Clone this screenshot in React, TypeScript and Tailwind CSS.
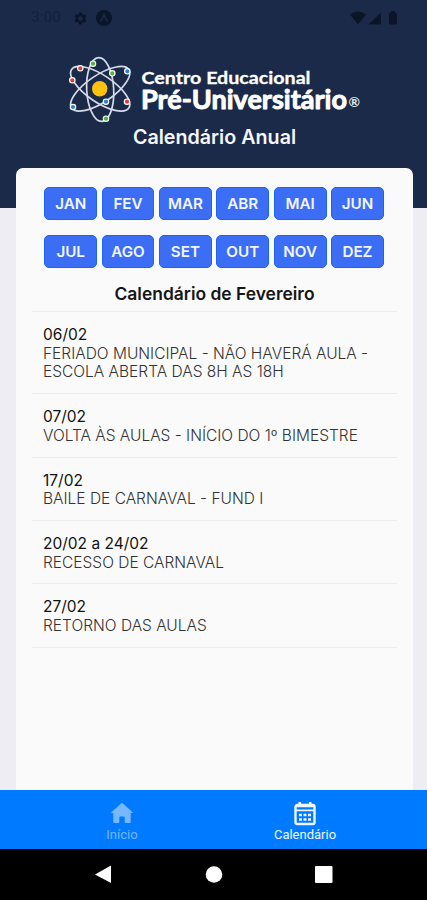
import type { ReactNode } from "react";
import { MdSettings } from "react-icons/md";

type CalendarEvent = {
  date: string;
  title: string;
};

const MONTH_ROWS = [
  ["JAN", "FEV", "MAR", "ABR", "MAI", "JUN"],
  ["JUL", "AGO", "SET", "OUT", "NOV", "DEZ"],
];

const EVENTS: CalendarEvent[] = [
  {
    date: "06/02",
    title: "FERIADO MUNICIPAL - NÃO HAVERÁ AULA - ESCOLA ABERTA DAS 8H AS 18H",
  },
  { date: "07/02", title: "VOLTA ÀS AULAS - INÍCIO DO 1º BIMESTRE" },
  { date: "17/02", title: "BAILE DE CARNAVAL - FUND I" },
  { date: "20/02 a 24/02", title: "RECESSO DE CARNAVAL" },
  { date: "27/02", title: "RETORNO DAS AULAS" },
];

const ELECTRONS = [
  { x: 20.3, y: 18.3, color: "#e23b3b" },
  { x: 12.3, y: 30.3, color: "#e23b3b" },
  { x: 33, y: 13.7, color: "#4cb82e" },
  { x: 52.3, y: 23.3, color: "#4cb82e" },
  { x: 67.3, y: 21.3, color: "#2f7fd6" },
  { x: 67, y: 51.7, color: "#e23b3b" },
  { x: 46, y: 51.7, color: "#2f7fd6" },
  { x: 13, y: 57, color: "#2f7fd6" },
  { x: 46, y: 68.7, color: "#4cb82e" },
];

function StatusBar() {
  return (
    <div className="flex h-9 items-center justify-between pl-[31px] pr-[29px] text-[#0a1628]">
      <div className="flex items-center">
        <span className="w-[42px] font-['Roboto'] text-[15.500px] text-[#12213c]">3:00</span>
        <MdSettings className="size-[15px]" />
        <svg viewBox="0 0 16 16" className="ml-[8px] size-4">
          <circle cx="8" cy="8" r="8" fill="currentColor" />
          <path
            d="M4.300 11.500Q6.500 8.500 8 4.600 9.500 8.500 11.700 11.500"
            fill="none"
            stroke="#1b2a49"
            strokeWidth="1.600"
          />
        </svg>
      </div>
      <svg viewBox="0 0 48 14" className="h-[14px] w-12" fill="currentColor">
        <path d="M0 3.500Q8 -2.500 16 3.500L8 13.500z" />
        <path d="M31 1.500v12H18.500z" />
        <path d="M41 0h4v2h-4zM39 3q0-1.500 1.500-1.500h5q1.500 0 1.500 1.500v9q0 1.500-1.500 1.500h-5q-1.500 0-1.500-1.500z" />
      </svg>
    </div>
  );
}

function Logo() {
  return (
    <svg viewBox="0 0 300 80" className="ml-[68px] h-20 w-[300px]">
      <g transform="translate(-8 0)">
        <g fill="none" stroke="#d5dbe8" strokeWidth="1.700">
          <ellipse cx="40.200" cy="39.500" rx="13.500" ry="32" transform="rotate(-3 40.200 39.500)" />
          <ellipse cx="40.200" cy="38.800" rx="34.500" ry="13.500" transform="rotate(34 40.200 38.800)" />
          <ellipse cx="40.200" cy="38.800" rx="34.500" ry="13.500" transform="rotate(-34 40.200 38.800)" />
        </g>
        <circle cx="39.700" cy="38.700" r="7.700" fill="#fdc20f" />
        {ELECTRONS.map((e) => (
          <circle
            key={`${e.x}-${e.y}`}
            cx={e.x}
            cy={e.y}
            r="2.700"
            fill={e.color}
            stroke="#fff"
            strokeWidth="1.200"
          />
        ))}
      </g>
      <g fill="#fff" stroke="#fff" strokeLinejoin="round" className="font-['Lato'] font-bold">
        <text x="73.500" y="33.800" fontSize="17.500" strokeWidth="0.300" textLength="169" lengthAdjust="spacingAndGlyphs">
          Centro Educacional
        </text>
        <text x="73" y="58.800" fontSize="26" strokeWidth="0.900" textLength="206" lengthAdjust="spacingAndGlyphs">
          Pré-Universitário
        </text>
      </g>
      <text
        x="280.500"
        y="57"
        fontSize="14"
        fill="#dfe4ee"
        className="font-['Lato'] font-bold"
        textLength="11.500"
        lengthAdjust="spacingAndGlyphs"
      >
        ®
      </text>
    </svg>
  );
}

function MonthButton({ label }: { label: string }) {
  return (
    <button className="h-[33px] rounded-[5px] border border-[#1c63ee] bg-[#3b6ef5] pt-px text-[15.200px] font-semibold leading-[30px] text-[#f3f6ff]">
      {label}
    </button>
  );
}

function EventItem({ date, title }: CalendarEvent) {
  return (
    <li className="border-b border-[#ececec] pb-[11px] pl-[11px] pr-4 pt-[14px] text-[15.500px] leading-[18.700px]">
      <p className="text-[#111]">{date}</p>
      <p className="font-light text-[#333]">{title}</p>
    </li>
  );
}

function TabItem({ label, active, children }: { label: string; active?: boolean; children: ReactNode }) {
  return (
    <div
      className={
        active
          ? "flex w-[183px] flex-col items-center text-[#f0f6ff]"
          : "flex w-[183px] flex-col items-center text-[#77b7ff]"
      }
    >
      {children}
      <span className="mt-px font-['Roboto'] text-[13px] leading-[16px]">{label}</span>
    </div>
  );
}

export default function App() {
  return (
    <div className="flex h-[900px] w-[427px] flex-col overflow-hidden bg-[#efedf4] font-['Inter',sans-serif]">
      <header className="h-[208px] shrink-0 bg-[#1b2a49]">
        <StatusBar />
        <div className="pt-[14px]">
          <Logo />
          <h1 className="-mt-[6px] pl-[2px] text-center text-[19.700px] font-semibold leading-[27px] text-[#f4f6fa]">
            Calendário Anual
          </h1>
        </div>
      </header>

      <main className="relative -mt-10 ml-4 w-[397px] grow rounded-t-[7px] bg-[#fafafa] px-4 pt-[18.500px]">
        <div className="flex flex-col gap-[15px] px-[12.300px]">
          {MONTH_ROWS.map((row) => (
            <div key={row[0]} className="grid w-[339.600px] grid-cols-6 gap-[4.600px]">
              {row.map((month) => (
                <MonthButton key={month} label={month} />
              ))}
            </div>
          ))}
        </div>

        <h2 className="mt-[14.500px] text-center text-[17.450px] font-semibold leading-6 text-[#151515]">
          Calendário de Fevereiro
        </h2>

        <ul className="mt-[5px] border-t border-[#ececec]">
          {EVENTS.map((event) => (
            <EventItem key={event.date} {...event} />
          ))}
        </ul>
      </main>

      <nav className="flex h-[59px] shrink-0 justify-center bg-[#007bff] pt-3">
        <TabItem label="Início">
          <svg viewBox="0 0 22 24" className="h-6 w-[22px]" fill="currentColor">
            <path d="M10.300 1.300q.7-.6 1.400 0L21.600 10.300q.5.700-.4.700H19.700v9q0 1-1 1h-4.200q-.8 0-.8-.8v-4.700q0-1-1-1h-3.400q-1 0-1 1v4.700q0 .8-.8.8H3.300q-1 0-1-1v-9H.8q-.9 0-.4-.7z" />
          </svg>
        </TabItem>
        <TabItem label="Calendário" active>
          <svg viewBox="0 0 22 24" className="h-6 w-[22px]" fill="none" stroke="currentColor">
            <rect x="1.500" y="3" width="19" height="19" rx="1.800" strokeWidth="2.400" />
            <path d="M5.800 0v3M16.200 0v3" strokeWidth="2.600" />
            <path d="M2 4.200h18M2 8.400h18" strokeWidth="1.900" />
            <path d="M5 13h3m1.500 0h3m1.500 0h3M5 17.500h3m1.500 0h3m1.500 0h3" strokeWidth="2.600" />
          </svg>
        </TabItem>
      </nav>

      <footer className="h-[51px] shrink-0 bg-black">
        <svg viewBox="0 0 427 51" className="h-[51px] w-[427px]" fill="#fff">
          <path d="M111 16.500v17.500L95 25.500z" />
          <circle cx="214" cy="25.500" r="8.300" />
          <rect x="315" y="17" width="17.500" height="17" rx="1" />
        </svg>
      </footer>
    </div>
  );
}
